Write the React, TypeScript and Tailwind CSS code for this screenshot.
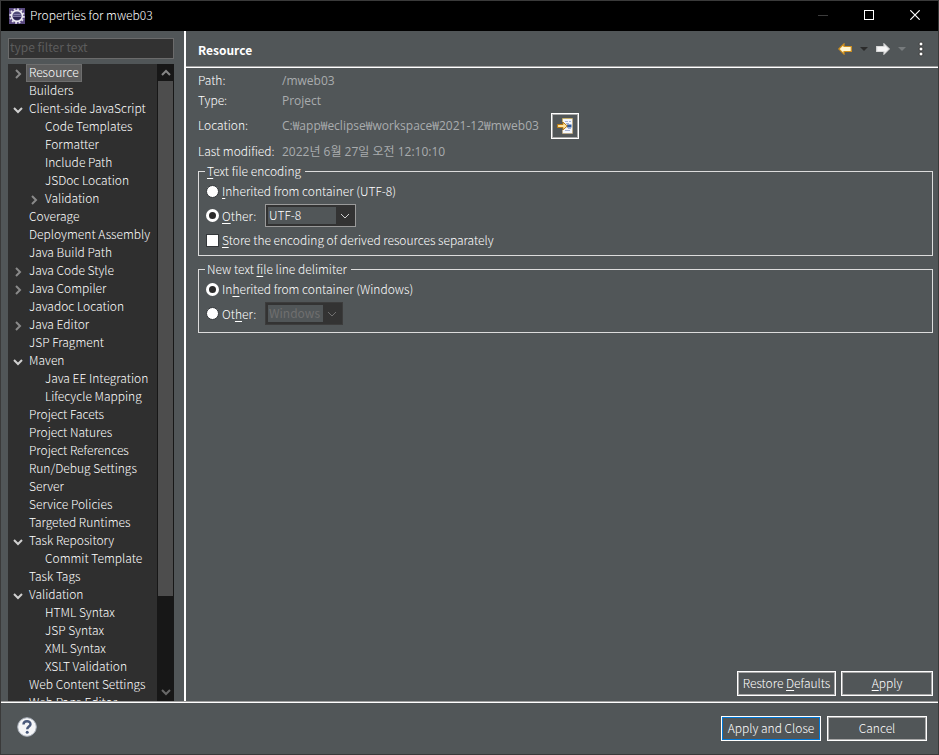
import type { ReactNode } from "react";

type Node = { label: string; depth?: number; state?: "open" | "closed"; selected?: boolean };

const nodes: Node[] = [
  { label: "Resource", state: "closed", selected: true },
  { label: "Builders" },
  { label: "Client-side JavaScript", state: "open" },
  { label: "Code Templates", depth: 1 },
  { label: "Formatter", depth: 1 },
  { label: "Include Path", depth: 1 },
  { label: "JSDoc Location", depth: 1 },
  { label: "Validation", depth: 1, state: "closed" },
  { label: "Coverage" },
  { label: "Deployment Assembly" },
  { label: "Java Build Path" },
  { label: "Java Code Style", state: "closed" },
  { label: "Java Compiler", state: "closed" },
  { label: "Javadoc Location" },
  { label: "Java Editor", state: "closed" },
  { label: "JSP Fragment" },
  { label: "Maven", state: "open" },
  { label: "Java EE Integration", depth: 1 },
  { label: "Lifecycle Mapping", depth: 1 },
  { label: "Project Facets" },
  { label: "Project Natures" },
  { label: "Project References" },
  { label: "Run/Debug Settings" },
  { label: "Server" },
  { label: "Service Policies" },
  { label: "Targeted Runtimes" },
  { label: "Task Repository", state: "open" },
  { label: "Commit Template", depth: 1 },
  { label: "Task Tags" },
  { label: "Validation", state: "open" },
  { label: "HTML Syntax", depth: 1 },
  { label: "JSP Syntax", depth: 1 },
  { label: "XML Syntax", depth: 1 },
  { label: "XSLT Validation", depth: 1 },
  { label: "Web Content Settings" },
  { label: "Web Page Editor" },
];

function Chevron({ dir, className, width = 2 }: { dir: "up" | "down" | "right"; className: string; width?: number }) {
  const d = { up: "M1 7 L5 3 L9 7", down: "M1 3 L5 7 L9 3", right: "M3 1 L7 5 L3 9" }[dir];
  return (
    <svg viewBox="0 0 10 10" className={`size-[10px] ${className}`} fill="none" stroke="currentColor" strokeWidth={width}>
      <path d={d} />
    </svg>
  );
}

function EclipseIcon() {
  return (
    <svg viewBox="0 0 16 16" className="size-4">
      <rect width="16" height="16" fill="#5a4a80" />
      <circle cx="8" cy="8" r="6.8" fill="none" stroke="#e8e6ee" strokeWidth="1.8" strokeDasharray="1.8 1.76" />
      <circle cx="8" cy="8" r="5.4" fill="#4f4a78" stroke="#f0eef4" strokeWidth="1.6" />
      <path d="M3.8 8.500h8.4a4.300 4.300 0 0 1-8.400 0Z" fill="#2a2450" />
      <path d="M4.500 6.500h7M4 8.500h8" stroke="#9d97c0" strokeWidth=".7" />
    </svg>
  );
}

function TitleBar() {
  return (
    <header className="flex h-[30px] shrink-0 items-center bg-black pl-2 text-white">
      <EclipseIcon />
      <h1 className="ml-[5px] flex-1 pb-0.5 text-[12px]">Properties for mweb03</h1>
      <button aria-label="Minimize" className="flex h-full w-[46px] items-center justify-center">
        <svg viewBox="0 0 10 10" className="size-[10px]"><path d="M0 4.500H10" stroke="#3c3c3c" /></svg>
      </button>
      <button aria-label="Maximize" className="flex h-full w-[46px] items-center justify-center pb-0.5">
        <svg viewBox="0 0 10 10" className="size-[10px]"><rect x=".5" y=".5" width="9" height="9" fill="none" stroke="#fff" /></svg>
      </button>
      <button aria-label="Close" className="flex h-full w-[46px] items-center justify-center pb-0.5">
        <svg viewBox="0 0 10 10" className="size-[10px]"><path d="M.3 .3 9.700 9.700M9.700 .3 .3 9.700" stroke="#fff" strokeWidth="1.2" /></svg>
      </button>
    </header>
  );
}

function TreeRow({ node }: { node: Node }) {
  return (
    <li className={`flex h-[18px] items-center ${node.depth ? "pl-[21px]" : "pl-[5px]"}`}>
      <span className="flex w-[13px] shrink-0 pt-0.5">
        {node.state === "open" && <Chevron dir="down" className="text-[#d0d0d0]" />}
        {node.state === "closed" && <Chevron dir="right" className="text-[#8a8a8a]" />}
      </span>
      <span className={`px-[3px] pb-0.5 leading-[16px] whitespace-nowrap ${node.selected ? "bg-[#5c5c5c] outline outline-[#6e6e6e] -outline-offset-1" : ""}`}>
        {node.label}
      </span>
    </li>
  );
}

function Sidebar() {
  return (
    <aside className="flex w-[183px] shrink-0 flex-col pt-[7px] pr-[10px] pl-[7px]">
      <input
        aria-label="type filter text"
        placeholder="type filter text"
        className="h-[21px] shrink-0 border border-[#6b6b6b] bg-[#323232] px-px pb-[5px] text-[12px] font-normal outline-none placeholder:text-[#5c5c5c]"
      />
      <div className="mt-[5px] flex min-h-0 flex-1 overflow-hidden bg-[#2f2f2f]">
        <ul className="min-w-0 flex-1 overflow-hidden">
          {nodes.map((n, i) => <TreeRow key={i} node={n} />)}
        </ul>
        <div className="flex w-[17px] shrink-0 flex-col items-center bg-[#171717]">
          <Chevron dir="up" className="mt-1 mb-[3px] shrink-0 text-[#858585]" />
          <div className="w-[15px] basis-[515px] bg-[#4d4d4d]" />
          <Chevron dir="down" className="mt-auto mb-[4px] shrink-0 text-[#686868]" />
        </div>
      </div>
    </aside>
  );
}

function Toolbar() {
  return (
    <div className="flex h-[35px] shrink-0 items-center pr-[14px] pl-3">
      <h2 className="flex-1 pt-[3px] text-[12px] font-bold text-white">Resource</h2>
      <button aria-label="Back">
        <svg viewBox="0 0 14 12" className="h-3 w-[14px]">
          <path d="M.8 6 6 .9V3.500H13.300V8.500H6V11.100Z" fill="#fff6d2" stroke="#cf8f1e" strokeWidth="1.200" />
        </svg>
      </button>
      <button aria-label="Back history" className="ml-2">
        <svg viewBox="0 0 8 4" className="h-1 w-2"><path d="M0 0h8L4 4Z" fill="#2b2b2b" /></svg>
      </button>
      <button aria-label="Forward" className="ml-2">
        <svg viewBox="0 0 14 12" className="h-3 w-[14px]">
          <path d="M13.200 6 8 .9V3.500H.7V8.500H8V11.100Z" fill="#f6f6f6" stroke="#d8d8d8" strokeWidth="1.200" />
        </svg>
      </button>
      <button aria-label="Forward history" className="ml-2">
        <svg viewBox="0 0 8 4" className="h-1 w-2"><path d="M0 0h8L4 4Z" fill="#777b7d" /></svg>
      </button>
      <button aria-label="View menu" className="ml-3">
        <svg viewBox="0 0 6 16" className="h-4 w-[6px]">
          {[3, 8, 13].map((y) => <circle key={y} cx="3" cy={y} r="2" fill="#fff" stroke="#333" strokeWidth=".9" />)}
        </svg>
      </button>
    </div>
  );
}

function Info({ label, className, children }: { label: string; className: string; children: ReactNode }) {
  return (
    <div className={`flex items-center ${className}`}>
      <dt className="w-[84px] pb-0.5 whitespace-nowrap">{label}</dt>
      <dd className="flex items-center font-['Open_Sans','Noto_Sans_CJK_KR',sans-serif] font-normal text-[#a9acae]">{children}</dd>
    </div>
  );
}

function OpenButton() {
  return (
    <button aria-label="Show in system explorer" className="ml-3 flex h-[26px] w-7 items-center justify-center border border-white outline outline-[#a8a8a8] -outline-offset-2">
      <svg viewBox="0 0 16 16" className="size-4">
        <path d="M6 1H15.500V15H6Z" fill="#f4f6fb" />
        <path d="M5.500 4V.5H15.500" fill="none" stroke="#c9b26a" />
        <path d="M15.500 .5V15.500H5.500V12" fill="none" stroke="#b9a98a" />
        <path d="M8 3.500h3M12 3.500h2M9 5.500h3M11 10.500h3M8 12.500h5" stroke="#a3b1d6" />
        <path d="M10 8h4.500" stroke="#2f5a9e" strokeWidth="3" />
        <path d="M.6 6.500H6V4.200L10.300 8 6 11.800V9.500H.6Z" fill="#fde3a0" stroke="#b97a12" />
      </svg>
    </button>
  );
}

const radioClass =
  "size-[13px] shrink-0 appearance-none rounded-full border border-[#33373a] bg-white checked:border-[3px] checked:border-white checked:bg-[#2b2b2b]";

function Combo({ id, value, options, disabled, className }: { id: string; value: string; options: string[]; disabled?: boolean; className: string }) {
  return (
    <div className={`flex h-[23px] items-center border bg-[#333] p-px ${disabled ? "border-[#3c3c3c]" : "border-[#9a9a9a]"} ${className}`}>
      <select
        aria-label={id}
        defaultValue={value}
        disabled={disabled}
        className={`ml-px h-[17px] min-w-0 flex-1 appearance-none bg-[#515658] px-px pb-0.5 text-[12px] leading-[15px] outline-none ${disabled ? "font-normal text-[#6f6f6f] opacity-100" : "text-white"}`}
      >
        {options.map((o) => <option key={o}>{o}</option>)}
      </select>
      <Chevron dir="down" width={1} className={`mx-1 shrink-0 ${disabled ? "text-[#6f6f6f]" : "text-[#d0d0d0]"}`} />
    </div>
  );
}

function Group({ legend, className, children }: { legend: ReactNode; className: string; children: ReactNode }) {
  return (
    <fieldset className={`border border-[#dcdcdc] pl-[7px] ${className}`}>
      <legend className="-ml-px h-[18px] pr-1 pl-0.5 leading-[18px]">{legend}</legend>
      {children}
    </fieldset>
  );
}

const buttonClass = "h-[25px] whitespace-nowrap border border-white pb-0.5 text-center leading-[21px] outline -outline-offset-2";
const underline = "underline underline-offset-2";

export default function App() {
  return (
    <div className="flex h-screen flex-col border border-[#3a3a3a] bg-[#515658] font-['Noto_Sans_CJK_KR','Liberation_Sans',sans-serif] text-[12px] leading-[18px] font-light text-white">
      <TitleBar />
      <div className="flex min-h-0 flex-1">
        <Sidebar />
        <main className="flex min-w-0 flex-1 flex-col border-l-2 border-white">
          <Toolbar />
          <div className="h-0.5 shrink-0 border-t border-b border-t-[#a0a0a0] border-b-white" />
          <div className="flex-1 pr-[5px] pl-3">
            <dl>
              <Info label="Path:" className="mt-1 h-[18px]">/mweb03</Info>
              <Info label="Type:" className="mt-0.5 h-[18px]">Project</Info>
              <Info label="Location:" className="mt-[3px] h-[26px]">
                C:₩app₩eclipse₩workspace₩2021-12₩mweb03
                <OpenButton />
              </Info>
              <Info label="Last modified:" className="mt-1 h-[18px]">2022년 6월 27일 오전 12:10:10</Info>
            </dl>
            <Group className="mt-px h-[94px]" legend={<><span className={underline}>T</span>ext file encoding</>}>
              <label className="flex h-[22px] items-center gap-[3px]">
                <input type="radio" name="encoding" className={radioClass} />
                <span><span className={underline}>I</span>nherited from container (UTF-8)</span>
              </label>
              <div className="mt-0.5 flex h-[23px] items-center">
                <label className="flex w-[59px] items-center gap-[3px]">
                  <input type="radio" name="encoding" defaultChecked className={radioClass} />
                  <span><span className={underline}>O</span>ther:</span>
                </label>
                <Combo id="Encoding" value="UTF-8" options={["UTF-8", "UTF-16", "US-ASCII"]} className="w-[91px]" />
              </div>
              <label className="mt-[3px] flex h-5 items-center gap-[3px]">
                <input type="checkbox" className="size-[13px] shrink-0 appearance-none border border-[#33373a] bg-white" />
                <span><span className={underline}>S</span>tore the encoding of derived resources separately</span>
              </label>
            </Group>
            <Group className="mt-1 h-[73px]" legend={<>New text <span className={underline}>f</span>ile line delimiter</>}>
              <label className="flex h-[22px] items-center gap-[3px]">
                <input type="radio" name="delimiter" defaultChecked className={radioClass} />
                <span>In<span className={underline}>h</span>erited from container (Windows)</span>
              </label>
              <div className="mt-0.5 flex h-[23px] items-center">
                <label className="flex w-[59px] items-center gap-[3px]">
                  <input type="radio" name="delimiter" className={radioClass} />
                  <span>Ot<span className={underline}>h</span>er:</span>
                </label>
                <Combo id="Line delimiter" value="Windows" options={["Windows", "Unix"]} disabled className="w-[78px]" />
              </div>
            </Group>
          </div>
          <div className="flex shrink-0 justify-end gap-[5px] pr-[5px] pb-[5px]">
            <button className={`w-[99px] outline-[#a8a8a8] ${buttonClass}`}>Restore <span className={underline}>D</span>efaults</button>
            <button className={`w-[92px] outline-[#a8a8a8] ${buttonClass}`}><span className={underline}>A</span>pply</button>
          </div>
        </main>
      </div>
      <footer className="flex h-[53px] shrink-0 flex-col">
        <div className="h-0.5 shrink-0 border-t border-b border-t-[#a0a0a0] border-b-white" />
        <div className="flex flex-1 items-center gap-1.5 pr-[11px] pl-4">
          <button aria-label="Help" className="mr-auto mb-1">
            <svg viewBox="0 0 20 20" className="size-5">
              <circle cx="10" cy="10" r="9.300" fill="#f4f5f7" stroke="#a9b0bb" />
              <path d="M6.500 7.600C6.500 3.200 13.600 3.300 13.500 7.200 13.400 9.500 10.200 9.600 10.200 12.300" fill="none" stroke="#4a5a7c" strokeWidth="2.400" />
              <circle cx="10.200" cy="15.300" r="1.500" fill="#4a5a7c" />
            </svg>
          </button>
          <button className={`w-[100px] outline-[#0078d7] ${buttonClass}`}>Apply and Close</button>
          <button className={`w-[100px] outline-[#a8a8a8] ${buttonClass}`}>Cancel</button>
        </div>
      </footer>
    </div>
  );
}
